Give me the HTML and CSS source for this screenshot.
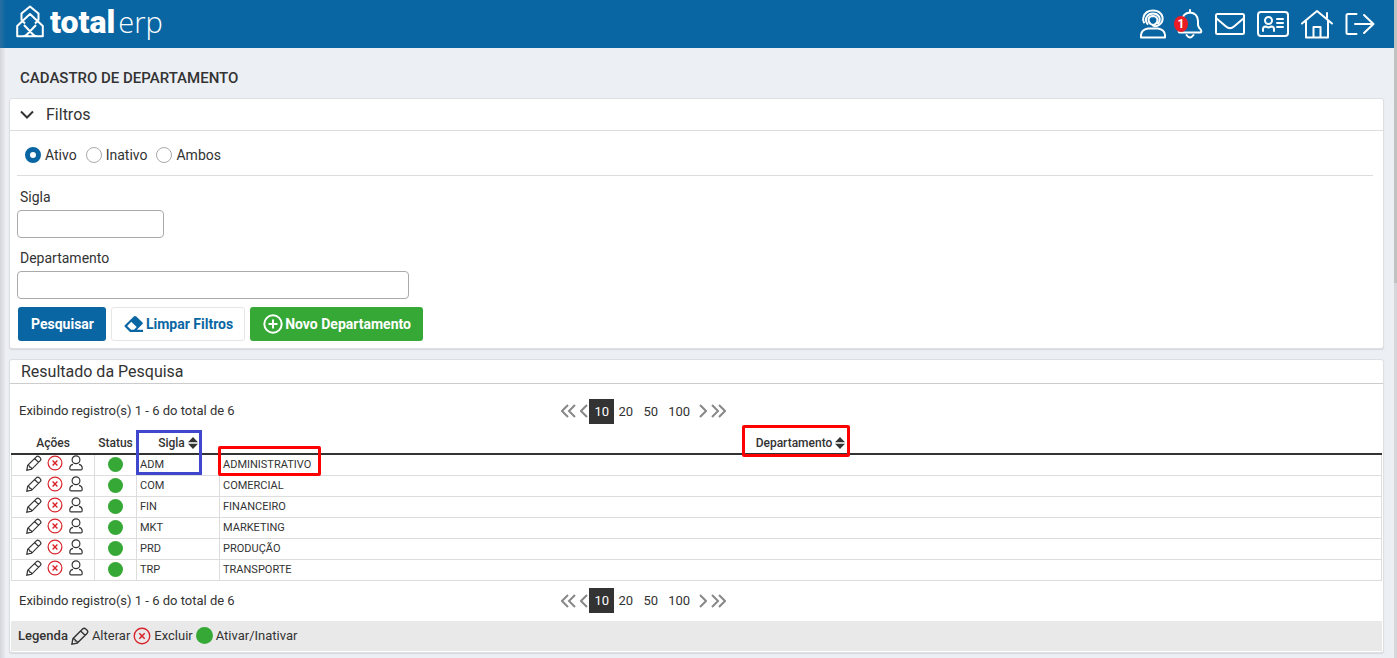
FILE: index.html
```html
<!DOCTYPE html>
<html lang="pt-BR">
<head>
<meta charset="utf-8">
<title>Cadastro de Departamento</title>
<link rel="stylesheet" href="styles.css">
</head>
<body>
<svg class="sprite" aria-hidden="true">
  <symbol id="pencil" viewBox="0 0 16 16"><path d="M.8 15.200 1.700 10.400 10.300 1.800 Q11.700 .4 13.100 1.700 L14.300 2.900 Q15.600 4.300 14.200 5.700 L5.600 14.300Z M8.600 3.500 12.500 7.400 M1.900 10.600 Q3.900 10.400 3.800 12.200 Q5.600 12.100 5.600 14.100"/></symbol>
  <symbol id="cross" viewBox="0 0 16 16"><circle cx="8" cy="8" r="6.900"/><path d="M5.600 5.600 10.400 10.400 M10.400 5.600 5.600 10.400" stroke-width="1.400"/></symbol>
  <symbol id="person" viewBox="0 0 16 16"><circle cx="8" cy="4.800" r="3.900"/><path d="M5 9.300 Q1.800 9.800 1.800 13.400 Q1.800 14.900 3 14.900 H13 Q14.200 14.900 14.200 13.400 Q14.200 9.800 11 9.300"/></symbol>
  <symbol id="sort" viewBox="0 0 10 12"><path d="M5 0 L10 5.300 H0Z M5 12 L0 6.700 H10Z"/></symbol>
  <symbol id="prev" viewBox="0 0 8 14"><path d="M7 1 1 7 7 13"/></symbol>
  <symbol id="next" viewBox="0 0 8 14"><path d="M1 1 7 7 1 13"/></symbol>
  <symbol id="first" viewBox="0 0 15 14"><path d="M7 1 1 7 7 13 M14 1 8 7 14 13"/></symbol>
  <symbol id="last" viewBox="0 0 15 14"><path d="M1 1 7 7 1 13 M8 1 14 7 8 13"/></symbol>
</svg>
<header class="topbar">
  <a class="brand" href="#">
    <svg class="brand-mark" viewBox="0 0 28 33"><path d="M5.500 15.500 V8.500 L14 1.500 22.500 8.500 V15.500 M9 18.500 6.500 16 14 9 21.500 16 19 18.500 M6.500 16 1.200 21 V31.200 H7 Q9.500 31.200 11.500 29 L20 20 M21.500 16 26.800 21 V31.200 H21 Q18.500 31.200 16.500 29 L8 20 M8 31.200 H20"/></svg>
    <span class="brand-name"><b>total</b><span class="brand-thin">erp</span></span>
  </a>
  <nav class="tools">
    <a href="#" aria-label="Suporte"><svg class="tool-support" viewBox="0 0 28 30"><path d="M5 13.500 Q3.500 11 4.500 8 Q6.500 1.500 14 1.500 Q21.500 1.500 23.500 8 Q24.500 13 20 16 Q17 18 14 16.500"/><path d="M8.500 15 Q5.500 11 8 7.500 Q10 4.500 14 4.500 Q18 4.500 20 7.500 Q22 11.500 19 14.500"/><path d="M9.500 10 Q10.500 7 14 7 Q18 7.500 18.500 10.500 Q18.500 15 14 16 Q9.500 15 9.500 10Z"/><path d="M9 19.500 H19 Q25.500 20.500 26 26 V28.500 H2 V26 Q2.500 20.500 9 19.500Z"/></svg></a>
    <a href="#" class="bell" aria-label="Notificações"><svg class="tool-bell" viewBox="0 0 26 30"><path d="M13 3.500 V1 M5 18 V12 Q5.500 4 13 3.500 Q20.500 4 21 12 V16 Q21.500 19 24 21 Q25 23.500 23 23.500 H3 Q1 23.500 2 21 Q5 18.500 5 16 M9.500 26 Q13 31 16.500 26"/></svg><span class="badge">1</span></a>
    <a href="#" aria-label="Mensagens"><svg class="tool-mail" viewBox="0 0 30 22"><rect x="1" y="1" width="28" height="20" rx="1.500"/><path d="M1 5 11 13.500 Q15 17 19 13.500 L29 5"/></svg></a>
    <a href="#" aria-label="Perfil"><svg class="tool-card" viewBox="0 0 32 26"><rect x="1" y="1" width="30" height="24" rx="3"/><circle cx="11.500" cy="9.500" r="3.500"/><path d="M6 20 V18 Q6 15.500 8.500 15.500 L11.500 16.500 14.500 15.500 Q17 15.500 17 18 V20 M20 8 H26 M20 12 H26 M20 16 H26"/></svg></a>
    <a href="#" aria-label="Início"><svg class="tool-home" viewBox="0 0 32 30"><path d="M1 14.500 16 2 31 14.500 M5 12 V28.500 H27 V12 M12.500 28 V18 H19.500 V28 M26 9 V4"/></svg></a>
    <a href="#" aria-label="Sair"><svg class="tool-exit" viewBox="0 0 30 22"><path d="M11.500 1 H3 Q1.500 1 1.500 2.500 V19.500 Q1.500 21 3 21 H11.500 M10 11 H28 M19 2 28.500 11 19 20"/></svg></a>
  </nav>
</header>
<main class="page">
  <h1 class="page-title">CADASTRO DE DEPARTAMENTO</h1>
  <form class="panel filters">
    <h2 class="panel-head filters-head"><svg class="chevron" viewBox="0 0 14 9"><path d="M1 1.500 7 7.500 13 1.500"/></svg>Filtros</h2>
    <div class="filters-body">
      <div class="radios">
        <label><input type="radio" name="situacao" checked>Ativo</label>
        <label><input type="radio" name="situacao">Inativo</label>
        <label><input type="radio" name="situacao">Ambos</label>
      </div>
      <div class="field"><label for="sigla">Sigla</label><input class="short" id="sigla" type="text"></div>
      <div class="field"><label for="departamento">Departamento</label><input class="long" id="departamento" type="text"></div>
      <div class="actions">
        <button class="btn primary" type="button">Pesquisar</button>
        <button class="btn plain" type="button"><svg class="eraser" viewBox="0 0 20 16"><path fill-rule="evenodd" d="M11 0 Q11.700 0 12.300 .6 L18.500 6.500 Q19.200 7.300 18.500 8.100 L12.800 13.800 H19 V16 H6 L.8 10.800 Q0 10 .8 9.200 L9.800 .6 Q10.400 0 11 0Z M7.200 5.800 3.200 10 7 13.800 H10 L12.700 11Z"/></svg>Limpar Filtros</button>
        <button class="btn success" type="button"><svg class="plus" viewBox="0 0 20 20"><circle cx="10" cy="10" r="8.700"/><path d="M10 5.500 V14.500 M5.500 10 H14.500"/></svg>Novo Departamento</button>
      </div>
    </div>
  </form>
  <section class="panel results">
    <h2 class="panel-head results-head">Resultado da Pesquisa</h2>
    <div class="results-body">
      <div class="pager">
        <span class="count">Exibindo registro(s) 1 - 6 do total de 6</span>
        <nav class="pages"><a href="#" aria-label="Primeira"><svg class="dbl"><use href="#first"/></svg></a><a href="#" aria-label="Anterior"><svg class="sgl"><use href="#prev"/></svg></a><a class="size current" href="#">10</a><a class="size" href="#">20</a><a class="size" href="#">50</a><a class="size wide" href="#">100</a><a href="#" aria-label="Próxima"><svg class="sgl"><use href="#next"/></svg></a><a href="#" aria-label="Última"><svg class="dbl"><use href="#last"/></svg></a></nav>
      </div>
      <table class="grid">
        <colgroup><col class="c-actions"><col class="c-status"><col class="c-sigla"><col></colgroup>
        <thead><tr><th>Ações</th><th>Status</th><th><span class="mark blue">Sigla<svg class="sort"><use href="#sort"/></svg></span></th><th><span class="mark red-head">Departamento<svg class="sort"><use href="#sort"/></svg></span></th></tr></thead>
        <tbody>
          <tr><td><span class="row-actions"><a href="#" aria-label="Alterar"><svg class="ico"><use href="#pencil"/></svg></a><a href="#" aria-label="Excluir"><svg class="ico danger"><use href="#cross"/></svg></a><a href="#" aria-label="Usuário"><svg class="ico"><use href="#person"/></svg></a></span></td><td><span class="dot"></span></td><td>ADM</td><td><span class="mark red-cell">ADMINISTRATIVO</span></td></tr>
          <tr><td><span class="row-actions"><a href="#" aria-label="Alterar"><svg class="ico"><use href="#pencil"/></svg></a><a href="#" aria-label="Excluir"><svg class="ico danger"><use href="#cross"/></svg></a><a href="#" aria-label="Usuário"><svg class="ico"><use href="#person"/></svg></a></span></td><td><span class="dot"></span></td><td>COM</td><td>COMERCIAL</td></tr>
          <tr><td><span class="row-actions"><a href="#" aria-label="Alterar"><svg class="ico"><use href="#pencil"/></svg></a><a href="#" aria-label="Excluir"><svg class="ico danger"><use href="#cross"/></svg></a><a href="#" aria-label="Usuário"><svg class="ico"><use href="#person"/></svg></a></span></td><td><span class="dot"></span></td><td>FIN</td><td>FINANCEIRO</td></tr>
          <tr><td><span class="row-actions"><a href="#" aria-label="Alterar"><svg class="ico"><use href="#pencil"/></svg></a><a href="#" aria-label="Excluir"><svg class="ico danger"><use href="#cross"/></svg></a><a href="#" aria-label="Usuário"><svg class="ico"><use href="#person"/></svg></a></span></td><td><span class="dot"></span></td><td>MKT</td><td>MARKETING</td></tr>
          <tr><td><span class="row-actions"><a href="#" aria-label="Alterar"><svg class="ico"><use href="#pencil"/></svg></a><a href="#" aria-label="Excluir"><svg class="ico danger"><use href="#cross"/></svg></a><a href="#" aria-label="Usuário"><svg class="ico"><use href="#person"/></svg></a></span></td><td><span class="dot"></span></td><td>PRD</td><td>PRODUÇÃO</td></tr>
          <tr><td><span class="row-actions"><a href="#" aria-label="Alterar"><svg class="ico"><use href="#pencil"/></svg></a><a href="#" aria-label="Excluir"><svg class="ico danger"><use href="#cross"/></svg></a><a href="#" aria-label="Usuário"><svg class="ico"><use href="#person"/></svg></a></span></td><td><span class="dot"></span></td><td>TRP</td><td>TRANSPORTE</td></tr>
        </tbody>
      </table>
      <div class="pager pager-end">
        <span class="count">Exibindo registro(s) 1 - 6 do total de 6</span>
        <nav class="pages"><a href="#" aria-label="Primeira"><svg class="dbl"><use href="#first"/></svg></a><a href="#" aria-label="Anterior"><svg class="sgl"><use href="#prev"/></svg></a><a class="size current" href="#">10</a><a class="size" href="#">20</a><a class="size" href="#">50</a><a class="size wide" href="#">100</a><a href="#" aria-label="Próxima"><svg class="sgl"><use href="#next"/></svg></a><a href="#" aria-label="Última"><svg class="dbl"><use href="#last"/></svg></a></nav>
      </div>
      <div class="legend"><b>Legenda</b><svg class="ico"><use href="#pencil"/></svg><span>Alterar</span><svg class="ico danger"><use href="#cross"/></svg><span>Excluir</span><span class="dot"></span><span>Ativar/Inativar</span></div>
    </div>
  </section>
</main>
<div class="edge"></div>
<div class="scroll"></div>
</body>
</html>
```

FILE: styles.css
```css
* { box-sizing: border-box; }
body { margin: 0; background: #eceff4; color: #333; font: 14px/20px Roboto, "Liberation Sans", sans-serif; }
a { color: inherit; text-decoration: none; }
svg { display: block; flex: none; fill: none; stroke: currentColor; }
.sprite { position: absolute; width: 0; height: 0; }

.topbar { display: flex; justify-content: space-between; height: 48px; padding: 0 22px 0 16px; background: #0966a3; color: #fff; }
.brand { display: flex; gap: 6px; align-items: flex-start; padding-top: 5px; }
.brand-mark { width: 28px; height: 33px; stroke-width: 2; stroke-linejoin: round; }
.brand-name { display: flex; gap: 3px; align-items: baseline; line-height: 34px; }
.brand-name b { font-size: 32px; font-weight: 900; }
.brand-thin { font-family: "Open Sans", sans-serif; font-size: 29px; font-weight: 300; }
.tools { display: flex; align-items: center; gap: 12px; }
.tools svg { stroke-width: 2; stroke-linejoin: round; stroke-linecap: round; }
.tool-support { width: 28px; height: 30px; }
.tool-bell { width: 26px; height: 30px; }
.tool-mail { width: 30px; height: 22px; }
.tool-card { width: 32px; height: 26px; }
.tool-home { width: 32px; height: 30px; }
.tool-exit { width: 30px; height: 22px; }
.bell { position: relative; margin-left: -2px; }
.badge { position: absolute; top: 7px; left: -3px; width: 14px; height: 16px; border-radius: 50%; background: #ed1c24; font-size: 12px; font-weight: 700; line-height: 16px; text-align: center; }

.page { padding: 20px 13px 4px 9px; }
.page-title { margin: 0 0 10px; padding-left: 11px; font-size: 15px; font-weight: 500; line-height: 20px; }
.panel { border: 1px solid #dddfe2; border-radius: 3px; background: #fff; box-shadow: 0 1px 1px #d5d8dc; }
.panel-head { display: flex; align-items: center; margin: 0; font-size: 16px; font-weight: 400; }
.filters-head { gap: 12px; height: 32px; padding-left: 10px; border-bottom: 1px solid #ddd; }
.chevron { width: 14px; height: 9px; stroke-width: 2; }
.filters-body { padding: 0 10px 7px 7px; }
.radios { display: flex; gap: 9px; height: 45px; padding: 4px 0 0 8px; border-bottom: 1px solid #ddd; align-items: center; }
.radios label { display: flex; align-items: center; gap: 4px; }
.radios input { appearance: none; width: 16px; height: 16px; margin: 0; border: 1px solid #aaa; border-radius: 50%; background: #fff; }
.radios input:checked { border: 5px solid #0966a3; }
.field { display: flex; flex-direction: column; gap: 3px; margin-top: 10px; }
.radios + .field { margin-top: 11px; }
.field label { padding-left: 3px; }
.field input { height: 28px; border: 1px solid #aaa; border-radius: 4px; background: #fff; }
.short { width: 147px; }
.long { width: 392px; }
.actions { display: flex; gap: 5px; margin-top: 8px; padding-left: 1px; }
.btn { display: flex; align-items: center; justify-content: center; gap: 2px; height: 34px; padding: 0 11px 1px 12px; border: 1px solid transparent; border-radius: 3px; color: #fff; font: 700 14px/20px Roboto, sans-serif; }
.primary { background: #0966a3; }
.plain { border-color: #e6e6e6; background: #fff; color: #0966a3; }
.success { background: #35a835; }
.eraser { width: 20px; height: 16px; fill: currentColor; stroke: none; }
.plus { width: 20px; height: 20px; stroke-width: 2; }

.results { margin-top: 10px; }
.results-head { height: 24px; padding-left: 11px; border-bottom: 1px solid #ccc; }
.results-body { padding: 6px 1px 1px; }
.pager { display: grid; grid-template-columns: calc(40% - 3px) 1fr; align-items: center; height: 42px; padding-left: 8px; font-size: 13px; }
.pager-end { height: 40px; }
.pages { display: flex; align-items: center; gap: 4px; }
.pages svg { stroke-width: 2; color: #888; }
.dbl { width: 15px; height: 14px; }
.sgl { width: 8px; height: 14px; }
.size { width: 25px; height: 25px; margin-left: -4px; text-align: center; line-height: 25px; }
.current { margin-left: -3px; background: #333; color: #fff; }
.current + .size { margin-left: -5px; }
.wide { width: 32px; }

.grid { width: 100%; border-collapse: collapse; table-layout: fixed; font-size: 11px; }
.c-actions { width: 83px; }
.c-status { width: 42px; }
.c-sigla { width: 83px; }
.grid th { height: 22px; padding: 0; border-bottom: 2px solid #333; font-size: 12px; font-weight: 500; line-height: 20px; }
.grid td { height: 21px; padding: 0 0 0 3px; border: 1px solid #ddd; line-height: 16px; }
.grid td:nth-child(1), .grid td:nth-child(2) { padding: 0; }
.grid td:nth-child(1) { vertical-align: top; }
.row-actions { display: flex; justify-content: center; gap: 5px; padding-left: 4px; }
.ico { width: 16px; height: 16px; stroke-width: 1.2; }
.danger { color: #d9232b; }
.dot { display: block; width: 15px; height: 15px; margin: 0 auto; border-radius: 50%; background: #35a835; }
.sort { width: 10px; height: 12px; fill: currentColor; stroke: none; }
.mark { position: relative; display: inline-flex; align-items: center; gap: 3px; }
.mark::after { content: ""; position: absolute; border: 3px solid red; border-radius: 2px; }
.blue::after { inset: -3px -4px -22px -22px; border-color: #3f48cc; border-radius: 0; }
.red-head::after { inset: -8px -5px -4px -14px; }
.red-cell::after { inset: -11px -10px -3px -5px; }
.legend { display: flex; align-items: center; gap: 3px; height: 30px; padding-left: 7px; background: #e9e9e9; font-size: 13px; }
.legend b { font-weight: 500; }
.legend .ico { width: 18px; height: 18px; }
.legend .dot { width: 17px; height: 17px; margin: 0; }
.edge { position: fixed; top: 0; bottom: 0; left: 0; width: 6px; background: linear-gradient(to right, rgba(140, 140, 150, .25), rgba(140, 140, 150, 0)); pointer-events: none; }
.scroll { position: fixed; top: 0; right: 0; bottom: 0; width: 3px; background: linear-gradient(#c1c1c1 43%, #d6d7db 43%); }
```
